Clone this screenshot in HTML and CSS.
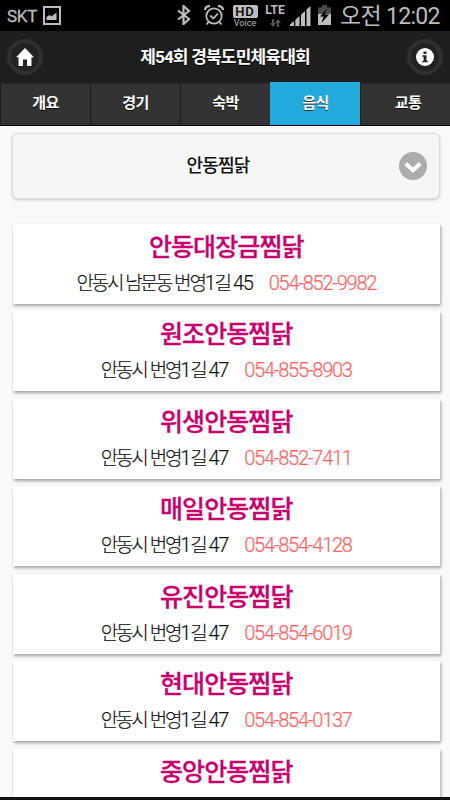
FILE: index.html
```html
<!DOCTYPE html>
<html lang="ko">
<head>
<meta charset="utf-8">
<title>제54회 경북도민체육대회</title>
<link rel="stylesheet" href="styles.css">
</head>
<body>
<div class="screen">
  <div class="status">
    <span class="carrier">SKT</span>
    <svg class="picture" width="18" height="19" viewBox="0 0 18 19"><path d="M1 1h16v17H1z" fill="none" stroke="#bdbdbd" stroke-width="2"/><path d="M3.5 14V11l3-2 2 1.500 5-4V14z" fill="#bdbdbd"/></svg>
    <svg class="bluetooth" width="14" height="20" viewBox="0 0 14 20"><path d="M1 5.500l11 8.500-5.500 5V1L12 6 1 14.500" fill="none" stroke="#bdbdbd" stroke-width="2.200"/></svg>
    <svg class="alarm" width="20" height="20" viewBox="0 0 20 20" fill="none" stroke="#bdbdbd"><circle cx="10" cy="11" r="7.700" stroke-width="1.800"/><path d="M6.300 10.500l3 3 4.500-4.800M4.500 17l-2 2.500M15.500 17l2 2.500" stroke-width="1.800"/><path d="M1 5a4 4 0 0 1 5-3.700M19 5a4 4 0 0 0-5-3.700" stroke-width="2.200"/></svg>
    <span class="hd"><b>HD</b><i>Voice</i></span>
    <span class="lte"><b>LTE</b>
      <svg width="11" height="8" viewBox="0 0 11 8"><path d="M2 0h2v4h2L3 8 0 4h2zM7 8h2V4h2L8 0 5 4h2z" fill="#555"/></svg>
    </span>
    <svg class="signal" width="21" height="20" viewBox="0 0 21 20" fill="#bdbdbd"><path d="M0 20v-1.500L4 15v5zM5.300 20v-6L9.500 10v10zM11 20V8.800L15 5v15zM16.500 20V3.600L20.500 0v20z"/></svg>
    <svg class="battery" width="13" height="20" viewBox="0 0 13 20"><path d="M4 0h5v2.500h4V9H0V2.500h4z" fill="#4b4b4b"/><path d="M0 9h13v11H0z" fill="#bdbdbd"/><path d="M8.500 4L2 11.500h3.500L3.500 18l7.500-8.500H7z" fill="#000"/></svg>
    <span class="clock">오전 12:02</span>
  </div>

  <header class="header">
    <a class="round"><svg width="18" height="18" viewBox="0 0 18 18"><path d="M9 0l9 9.300h-2.500V18H11v-6.500H7V18H2.500V9.300H0z" fill="#fff"/></svg></a>
    <h1>제54회 경북도민체육대회</h1>
    <a class="round"><svg width="18" height="18" viewBox="0 0 18 18"><circle cx="9" cy="9" r="9" fill="#fff"/><path d="M7.500 3.500h3V6h-3zM6.300 7.200h4.200v5.500h1.300v1.500H6.300v-1.500h1.300V8.700H6.300z" fill="#222"/></svg></a>
  </header>

  <nav class="tabs">
    <a>개요</a><a>경기</a><a>숙박</a><a class="active">음식</a><a>교통</a>
  </nav>

  <main class="content">
    <div class="select"><span>안동찜닭</span>
      <svg class="arrow" width="28" height="28" viewBox="0 0 28 28"><circle cx="14" cy="14" r="14" fill="#acacac"/><path d="M6.700 11.500L14 18.300l7.300-6.800" fill="none" stroke="#fff" stroke-width="4"/></svg>
    </div>
    <section class="list">
      <article class="card"><h2>안동대장금찜닭</h2><p><span>안동시 남문동 번영<b>1</b>길 <b>45</b></span><a>054-852-9982</a></p></article>
      <article class="card"><h2>원조안동찜닭</h2><p><span>안동시 번영<b>1</b>길 <b>47</b></span><a>054-855-8903</a></p></article>
      <article class="card"><h2>위생안동찜닭</h2><p><span>안동시 번영<b>1</b>길 <b>47</b></span><a>054-852-7411</a></p></article>
      <article class="card"><h2>매일안동찜닭</h2><p><span>안동시 번영<b>1</b>길 <b>47</b></span><a>054-854-4128</a></p></article>
      <article class="card"><h2>유진안동찜닭</h2><p><span>안동시 번영<b>1</b>길 <b>47</b></span><a>054-854-6019</a></p></article>
      <article class="card"><h2>현대안동찜닭</h2><p><span>안동시 번영<b>1</b>길 <b>47</b></span><a>054-854-0137</a></p></article>
      <article class="card"><h2>중앙안동찜닭</h2></article>
    </section>
  </main>
  <footer class="bottom"></footer>
</div>
</body>
</html>
```
FILE: styles.css
```css
* { box-sizing: border-box; }
body { margin: 0; background: #f9f9f9; font-family: Roboto, "Noto Sans CJK KR", sans-serif; }
.screen { width: 450px; height: 800px; display: flex; flex-direction: column; overflow: hidden; }
h1, h2, p { margin: 0; white-space: nowrap; }

.status { flex: none; height: 31px; background: #000; color: #bdbdbd; display: flex; align-items: flex-start; padding-left: 7px; }
.status svg { flex: none; }
.carrier { width: 36px; font-size: 17px; line-height: 32px; letter-spacing: -0.3px; -webkit-text-stroke: 0.3px; }
.picture { margin-top: 6px; }
.bluetooth { margin: 5px 0 0 116px; }
.alarm { margin: 5px 0 0 13px; }
.hd { width: 26px; margin: 5px 0 0 8px; display: flex; flex-direction: column; align-items: center; }
.hd b { width: 25px; height: 13px; border-radius: 2px; background: #bdbdbd; color: #000; font-size: 13px; font-weight: 500; line-height: 13px; text-align: center; letter-spacing: 1px; }
.hd i { font-style: normal; font-size: 9px; line-height: 10px; }
.lte { width: 22px; margin: 3px 0 0 6px; display: flex; flex-direction: column; align-items: center; }
.lte b { font-size: 12px; line-height: 14px; font-weight: 700; }
.lte svg { margin-top: 2px; }
.signal { margin: 6px 0 0 4px; }
.battery { margin: 5px 0 0 7px; }
.clock { margin-left: 9px; font-size: 23px; line-height: 33px; letter-spacing: -0.7px; white-space: nowrap; }

.header { flex: none; height: 52px; background: #1e1e1e; display: flex; align-items: center; justify-content: space-between; padding: 0 7px; }
.header h1 { color: #fff; font-size: 17px; line-height: 50px; font-weight: 700; letter-spacing: -0.8px; text-shadow: 0 1px 0 #000; }
.round { width: 36px; height: 36px; border: 4px solid #303030; border-radius: 50%; display: grid; place-items: center; background: #222; }

.tabs { flex: none; height: 43px; display: grid; grid-template-columns: repeat(5, 1fr); background: #1b1b1b; border-bottom: 1px solid #000; }
.tabs a { color: #fff; background: #333; border-left: 1px solid #1b1b1b; border-top: 1px solid #2a2a2a; font-size: 15px; line-height: 39px; font-weight: 700; letter-spacing: -0.5px; text-align: center; text-shadow: 0 1px 0 #111; }
.tabs a:last-child { padding-left: 5px; }
.tabs .active { background: #22aadd; border-color: #22aadd; text-shadow: 0 1px 0 #333; margin-top: -1px; line-height: 41px; }

.content { flex: 1; min-height: 0; overflow: hidden; padding: 7px 10px 0 12px; }
.select { height: 66px; border: 1px solid #ddd; border-radius: 6px; background: #f6f6f6; box-shadow: 0 1px 3px rgba(0,0,0,.2); display: grid; grid-template-columns: 40px 1fr 40px; align-items: center; text-align: center; }
.select span { grid-column: 2; color: #111; font-size: 18px; font-weight: 500; letter-spacing: -0.8px; padding: 0 16px 4px 0; }
.select .arrow { grid-column: 3; }
.list { display: grid; gap: 7.500px; margin: 24.500px 0 0 0.500px; }
.card { height: 80px; background: #fff; box-shadow: 1px 2px 3px rgba(0,0,0,.35); text-align: center; padding-top: 5px; }
.card h2 { color: #c8006e; font-size: 25px; line-height: 38px; height: 38px; font-weight: 500; letter-spacing: -0.9px; -webkit-text-stroke: 0.3px; }
.card p { display: flex; justify-content: center; align-items: baseline; gap: 16px; color: #111; font-size: 19px; line-height: 32px; font-weight: 300; letter-spacing: -2.200px; word-spacing: 0.600px; -webkit-text-stroke: 0.2px; }
.card p b { font-size: 20px; font-weight: 300; letter-spacing: -1.200px; }
.card p a { color: #ff6464; font-size: 20px; letter-spacing: -1.250px; }
.bottom { flex: none; height: 3px; background: #111; }
```
